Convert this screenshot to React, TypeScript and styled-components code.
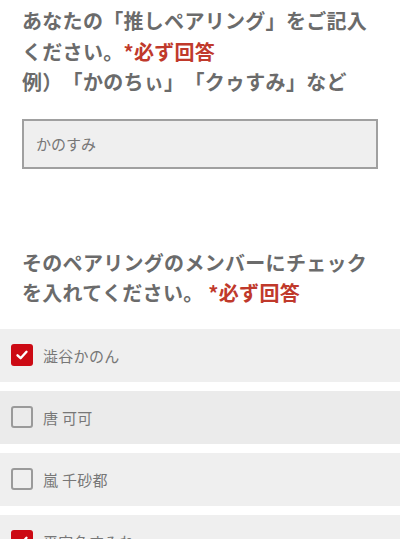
import React, { useState } from "react";
import styled, { createGlobalStyle } from "styled-components";

const Global = createGlobalStyle`
  html, body { margin: 0; padding: 0; background: #fff; }
  body {
    font-family: "Noto Sans CJK JP", "Noto Sans", sans-serif;
    text-spacing-trim: space-all;
    font-feature-settings: normal;
  }
`;

const Page = styled.div`
  width: 400px;
  padding-top: 6px;
`;

const Section = styled.div`
  padding: 0 22px;
`;

const Question = styled.h2`
  margin: 0;
  font-size: 20px;
  line-height: 30.5px;
  font-weight: 700;
  color: #6b6b6b;
  letter-spacing: 0.3px;
  text-spacing-trim: space-all;
`;

const Required = styled.span`
  color: #c0392b;
`;

const TextInput = styled.input`
  display: block;
  box-sizing: border-box;
  width: 356px;
  height: 50px;
  margin-top: 21px;
  padding: 0 12px;
  background: #efefef;
  border: 2px solid #a0a0a0;
  border-radius: 0;
  font-family: "Noto Sans CJK JP", sans-serif;
  font-size: 15px;
  color: #777;
  outline: none;
`;

const Spacer = styled.div<{ $h: number }>`
  height: ${(p) => p.$h}px;
`;

const List = styled.div`
  display: flex;
  flex-direction: column;
  gap: 9px;
  margin-top: 20px;
`;

const Row = styled.label<{ $shade: string }>`
  display: flex;
  align-items: center;
  gap: 10px;
  height: 53px;
  padding-left: 11px;
  background: ${(p) => p.$shade};
  cursor: pointer;
`;

const Box = styled.span<{ $on: boolean }>`
  box-sizing: border-box;
  width: 22px;
  height: 22px;
  border-radius: 3px;
  display: flex;
  align-items: center;
  justify-content: center;
  background: ${(p) => (p.$on ? "#cc0a14" : "transparent")};
  border: ${(p) => (p.$on ? "none" : "2px solid #9a9a9a")};
  flex-shrink: 0;
`;

const Name = styled.span`
  font-size: 15px;
  color: #777;
  letter-spacing: 0.3px;
`;

const members = [
  { name: "澁谷かのん", on: true, shade: "#efefef" },
  { name: "唐 可可", on: false, shade: "#ebebeb" },
  { name: "嵐 千砂都", on: false, shade: "#efefef" },
  { name: "平安名すみれ", on: true, shade: "#efefef" },
  { name: "葉月 恋", on: false, shade: "#efefef" },
];

export default function App() {
  const [checked, setChecked] = useState(members.map((m) => m.on));
  return (
    <Page>
      <Global />
      <Section>
        <Question>
          あなたの「推しペアリング」をご記入ください。<Required>*必ず回答</Required>
          <br />
          例）「かのちぃ」「クゥすみ」など
        </Question>
        <TextInput defaultValue="かのすみ" />
      </Section>
      <Spacer $h={79} />
      <Section>
        <Question>
          そのペアリングのメンバーにチェックを入れてください。 <Required>*必ず回答</Required>
        </Question>
      </Section>
      <List>
        {members.map((m, i) => (
          <Row
            key={m.name}
            $shade={m.shade}
            onClick={() =>
              setChecked((c) => c.map((v, j) => (j === i ? !v : v)))
            }
          >
            <Box $on={checked[i]}>
              {checked[i] && (
                <svg width="14" height="14" viewBox="0 0 14 14">
                  <path
                    d="M2.5 7.3 L5.6 10.2 L11.5 3.8"
                    fill="none"
                    stroke="#fff"
                    strokeWidth="2.4"
                    strokeLinecap="round"
                    strokeLinejoin="round"
                  />
                </svg>
              )}
            </Box>
            <Name>{m.name}</Name>
          </Row>
        ))}
      </List>
    </Page>
  );
}
